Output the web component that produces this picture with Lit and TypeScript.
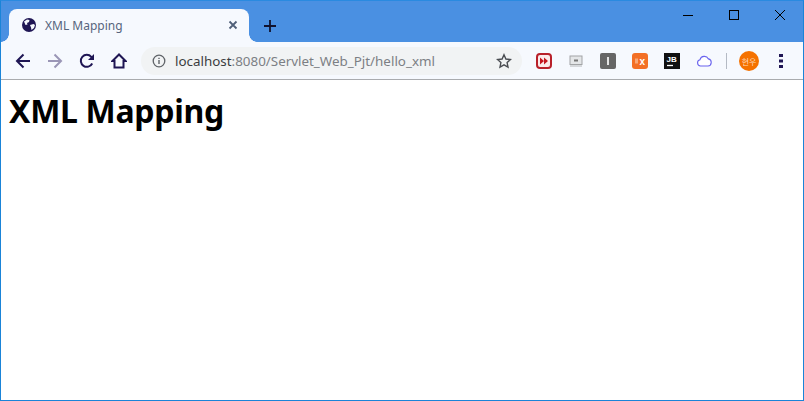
import { LitElement, html, css } from 'lit';
import { customElement } from 'lit/decorators.js';

@customElement('app-root')
export class AppRoot extends LitElement {
  static styles = css`
    :host {
      display: block;
      box-sizing: border-box;
      height: 401px;
      border: 1px solid #1a84d8;
      border-top-color: #2a8ae0;
      background: #fff;
      font-family: 'Noto Sans', 'Open Sans', sans-serif;
      overflow: hidden;
    }
    svg { display: block; flex: none; }
    svg text { font-family: 'Liberation Sans', sans-serif; font-weight: 700; }

    .titlebar {
      display: flex;
      height: 41px;
      padding-left: 8px;
      background: #4a90e2;
      align-items: flex-end;
    }
    .tab {
      position: relative;
      display: flex;
      align-items: center;
      box-sizing: border-box;
      width: 240px;
      height: 33px;
      padding: 0 11px 1px 12px;
      background: #f6f9fe;
      border-radius: 8px 8px 0 0;
    }
    .tab::before, .tab::after {
      content: '';
      position: absolute;
      bottom: 0;
      width: 8px;
      height: 8px;
      background: radial-gradient(circle at var(--cx) 0, #4a90e2 7.5px, #f6f9fe 8px);
    }
    .tab::before { left: -8px; --cx: 0; }
    .tab::after { right: -8px; --cx: 100%; }
    .tab-title {
      flex: 1;
      margin-left: 8px;
      font-size: 12px;
      color: #56657d;
    }
    .newtab { margin: 0 0 10px 15px; }
    .winctl { display: flex; margin-left: auto; align-self: flex-start; padding: 9px 18px 0 0; gap: 36px; }

    .toolbar {
      display: flex;
      align-items: center;
      box-sizing: border-box;
      height: 38px;
      padding: 1px 14px 0 14px;
      background: #f6f9fe;
      border-bottom: 1px solid #a9abae;
    }
    .nav { display: flex; align-items: center; gap: 16px; }
    .omnibox {
      display: flex;
      align-items: center;
      box-sizing: border-box;
      width: 381px;
      height: 28px;
      margin-left: 14px;
      padding: 0 10px 0 11px;
      border-radius: 14px;
      background: #f1f3f4;
    }
    .url {
      flex: 1;
      margin-left: 9px;
      font-size: 13.4px;
      color: #7c7f84;
      white-space: nowrap;
    }
    .url b { font-weight: 400; color: #3a3c40; }
    .ext { display: flex; align-items: center; margin-left: 14px; gap: 16px; }
    .sep { width: 1px; height: 16px; background: #b4bac4; margin-left: 14px; }
    .avatar {
      display: flex;
      align-items: center;
      justify-content: center;
      width: 20px;
      height: 20px;
      margin-left: 12px;
      border-radius: 50%;
      background: #f57200;
      color: #ffd9b8;
      font: 8px 'Noto Sans CJK KR', sans-serif;
    }
    .menu { margin-left: 20px; }

    h1 {
      margin: 11px 0 0 8px;
      font-size: 32px;
      line-height: 40px;
      font-weight: 700;
      letter-spacing: -0.3px;
      color: #000;
    }
  `;

  render() {
    return html`
      <div class="titlebar">
        <div class="tab">
          <svg width="16" height="16" viewBox="0 0 16 16">
            <circle cx="8" cy="8" r="7" fill="#1f1654" />
            <path d="M3 4.500l3-2 2.500.5-.5 2-2 1 .5 1.500-2 .5zM9 8l3.500-1 1.500 1-1 3-2.500 2-.5-2.500z" fill="#f6f9fe" />
          </svg>
          <span class="tab-title">XML Mapping</span>
          <svg width="10" height="10" viewBox="0 0 10 10">
            <path d="M1.500 1.500l7 7M8.500 1.500l-7 7" stroke="#4f5f78" stroke-width="1.800" />
          </svg>
        </div>
        <svg class="newtab" width="12" height="12" viewBox="0 0 12 12">
          <path d="M6 0v12M0 6h12" stroke="#10122e" stroke-width="1.800" />
        </svg>
        <div class="winctl">
          <svg width="10" height="10" viewBox="0 0 10 10"><path d="M0 5.500h10" stroke="#000" /></svg>
          <svg width="10" height="10" viewBox="0 0 10 10"><rect x=".5" y=".5" width="9" height="9" fill="none" stroke="#000" /></svg>
          <svg width="10" height="10" viewBox="0 0 10 10"><path d="M0 0l10 10M10 0L0 10" stroke="#000" /></svg>
        </div>
      </div>

      <div class="toolbar">
        <div class="nav">
          <svg width="16" height="16" viewBox="0 0 16 16"><path d="M15 8H2M8.500 1.500L2 8l6.500 6.500" fill="none" stroke="#1f1654" stroke-width="2" /></svg>
          <svg width="16" height="16" viewBox="0 0 16 16"><path d="M1 8h13M7.500 1.500L14 8l-6.500 6.500" fill="none" stroke="#9a96b6" stroke-width="2" /></svg>
          <svg width="16" height="16" viewBox="0 0 16 16"><path d="M13.200 10.500A6 6 0 1 1 12.300 3.800L14 5.500" fill="none" stroke="#1f1654" stroke-width="2" /><path d="M15 1v6H9z" fill="#1f1654" /></svg>
          <svg width="16" height="16" viewBox="0 0 16 16"><path d="M8 1.500L1.500 8H3.500v6.500h9V8h2z" fill="none" stroke="#1f1654" stroke-width="2" /></svg>
        </div>
        <div class="omnibox">
          <svg width="14" height="14" viewBox="0 0 14 14">
            <circle cx="7" cy="7" r="5.800" fill="none" stroke="#5f6368" stroke-width="1.300" />
            <path d="M7 6v4M7 3.800v1.300" stroke="#5f6368" stroke-width="1.400" />
          </svg>
          <span class="url"><b>localhost</b>:8080/Servlet_Web_Pjt/hello_xml</span>
          <svg width="16" height="16" viewBox="0 0 16 16">
            <path d="M8 1.800l1.900 4.200 4.600.5-3.400 3.100.9 4.500-4-2.300-4 2.300.9-4.500-3.400-3.100 4.600-.5z" fill="none" stroke="#4a4d52" stroke-width="1.400" />
          </svg>
        </div>
        <div class="ext">
          <svg width="16" height="16" viewBox="0 0 16 16">
            <rect x="1" y="1" width="14" height="14" rx="3" fill="#fbeaea" stroke="#b8202a" stroke-width="2" />
            <path d="M4 4.500L8 8l-4 3.500zM8 4.500L12 8l-4 3.500z" fill="#c4161f" />
          </svg>
          <svg width="16" height="16" viewBox="0 0 16 16">
            <rect x="2" y="3" width="12" height="8.500" fill="#e4e6e8" stroke="#a2a4a6" />
            <path d="M6 6.500h4v2H6z" fill="#777" />
            <path d="M2 13h12" stroke="#b4b6b8" />
          </svg>
          <svg width="16" height="16" viewBox="0 0 16 16">
            <rect width="16" height="16" rx="2" fill="#666" />
            <path d="M8 4v8" stroke="#e4e4e4" stroke-width="2" />
          </svg>
          <svg width="16" height="16" viewBox="0 0 16 16">
            <rect width="16" height="16" rx="3" fill="#f37026" />
            <path d="M3 5.500h3v5H3z" fill="#f9a878" />
            <text x="7.500" y="11.500" font-size="10" fill="#fff">x</text>
          </svg>
          <svg width="16" height="16" viewBox="0 0 16 16">
            <rect width="16" height="16" fill="#111" />
            <text x="2.500" y="8.500" font-size="8" fill="#fff">JB</text>
            <path d="M3 12.500h6" stroke="#fff" stroke-width="1.300" />
          </svg>
          <svg width="16" height="16" viewBox="0 0 16 16">
            <path d="M4.500 13a3.200 3.200 0 0 1-.5-6.300 4.500 4.500 0 0 1 8.400-.8A3.600 3.600 0 0 1 12 13z" fill="#fff" stroke="#6a64ee" stroke-width="1.100" />
          </svg>
        </div>
        <div class="sep"></div>
        <div class="avatar">현우</div>
        <svg class="menu" width="4" height="14" viewBox="0 0 4 14">
          <path d="M0 0h4v3H0zM0 5.500h4v3H0zM0 11h4v3H0z" fill="#1f1654" />
        </svg>
      </div>

      <h1>XML Mapping</h1>
    `;
  }
}
